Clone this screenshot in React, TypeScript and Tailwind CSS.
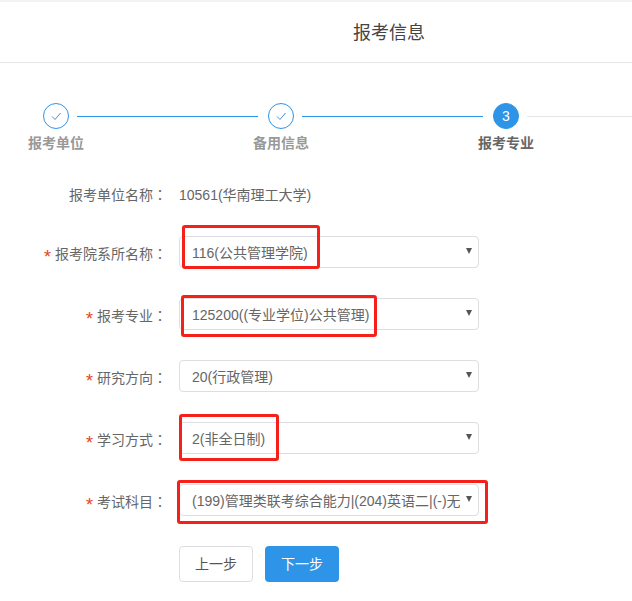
const steps = [
  { name: '报考单位', done: true },
  { name: '备用信息', done: true },
  { name: '报考专业', done: false },
];

const fields = [
  { label: '报考院系所名称', value: '116(公共管理学院)', mark: 'left-[3px] top-[-11px] w-[138px] h-[44px]' },
  { label: '报考专业', value: '125200((专业学位)公共管理)', mark: 'left-[2px] top-[-3px] w-[196px] h-[42px]' },
  { label: '研究方向', value: '20(行政管理)', mark: '' },
  { label: '学习方式', value: '2(非全日制)', mark: 'left-0 top-[-8px] w-[100px] h-[47px]' },
  { label: '考试科目', value: '(199)管理类联考综合能力|(204)英语二|(-)无', mark: 'left-[-2px] top-[-4px] w-[311px] h-[44px]' },
];

function Check() {
  return (
    <svg width="12" height="12" viewBox="0 0 12 12" fill="none" stroke="#4a90d9" strokeWidth="1">
      <path d="M2 6.5L5 9.5L10.5 3" />
    </svg>
  );
}

function Colon() {
  return <span className="font-['Noto_Sans_CJK_TC',sans-serif]">：</span>;
}

export default function App() {
  return (
    <div className="min-h-[601px] bg-white text-[14px] text-[#666] overflow-hidden font-['Liberation_Sans','Noto_Sans_CJK_SC',sans-serif]">
      <div className="h-[2px] bg-[#f2f2f2]" />
      <div className="h-[61px] border-b border-[#e6e6e6] pl-[353px] pt-[2px] flex items-center">
        <h1 className="text-[18px] font-normal text-[#444]">报考信息</h1>
      </div>

      <div className="flex pt-[40px] pl-[43px] overflow-hidden">
        {steps.map((step, i) => (
          <div key={step.name} className="w-[225px] shrink-0">
            <div className="flex items-center">
              <div
                className={`w-[26px] h-[26px] shrink-0 rounded-full flex items-center justify-center border ${
                  step.done ? 'border-[#2d94e8] bg-white' : 'border-[#2d94e8] bg-[#2d94e8] text-white'
                }`}
              >
                {step.done ? <Check /> : <span className="text-[14px] leading-none">{i + 1}</span>}
              </div>
              <div className={`ml-[8px] w-[181px] h-[1px] shrink-0 ${step.done ? 'bg-[#2d94e8]' : 'bg-[#e6e6e6]'}`} />
            </div>
            <div className={`-ml-[15px] mt-[4px] w-[56px] leading-[20px] font-bold ${step.done ? 'text-[#999]' : 'text-[#666]'}`}>
              {step.name}
            </div>
          </div>
        ))}
      </div>

      <form className="pt-[32px]">
        <div className="flex h-[20px] items-center mb-[31px]">
          <div className="w-[167px] text-right shrink-0">
            报考单位名称
            <Colon />
          </div>
          <div className="ml-[12px]">10561(华南理工大学)</div>
        </div>

        {fields.map((f) => (
          <div key={f.label} className="flex items-center mb-[30px]">
            <label className="w-[167px] text-right shrink-0 pt-[4px]">
              <span className="text-[18px] leading-none align-[-4px] text-[#e8431f] mr-[4px]">*</span>
              {f.label}
              <Colon />
            </label>
            <div className="relative ml-[12px] w-[300px] h-[32px]">
              <select
                defaultValue={f.value}
                className="w-full h-full appearance-none bg-white border border-[#dddee1] rounded-[4px] pl-[12px] pr-[18px] pt-[2px] text-[14px] text-[#666] outline-none"
              >
                <option>{f.value}</option>
              </select>
              <span className="absolute right-[7px] top-[12px] w-0 h-0 border-x-[3.5px] border-x-transparent border-t-[6px] border-t-[#555]" />
              {f.mark && (
                <span className={`absolute ${f.mark} border-[3px] border-[#f5201a] rounded-[3px] pointer-events-none`} />
              )}
            </div>
          </div>
        ))}

        <div className="flex gap-[12px] ml-[179px]">
          <button type="button" className="w-[74px] h-[36px] bg-white border border-[#dddee1] rounded-[4px] text-[#555]">
            上一步
          </button>
          <button type="button" className="w-[74px] h-[36px] bg-[#2d94e8] rounded-[4px] text-white">
            下一步
          </button>
        </div>
      </form>
    </div>
  );
}
